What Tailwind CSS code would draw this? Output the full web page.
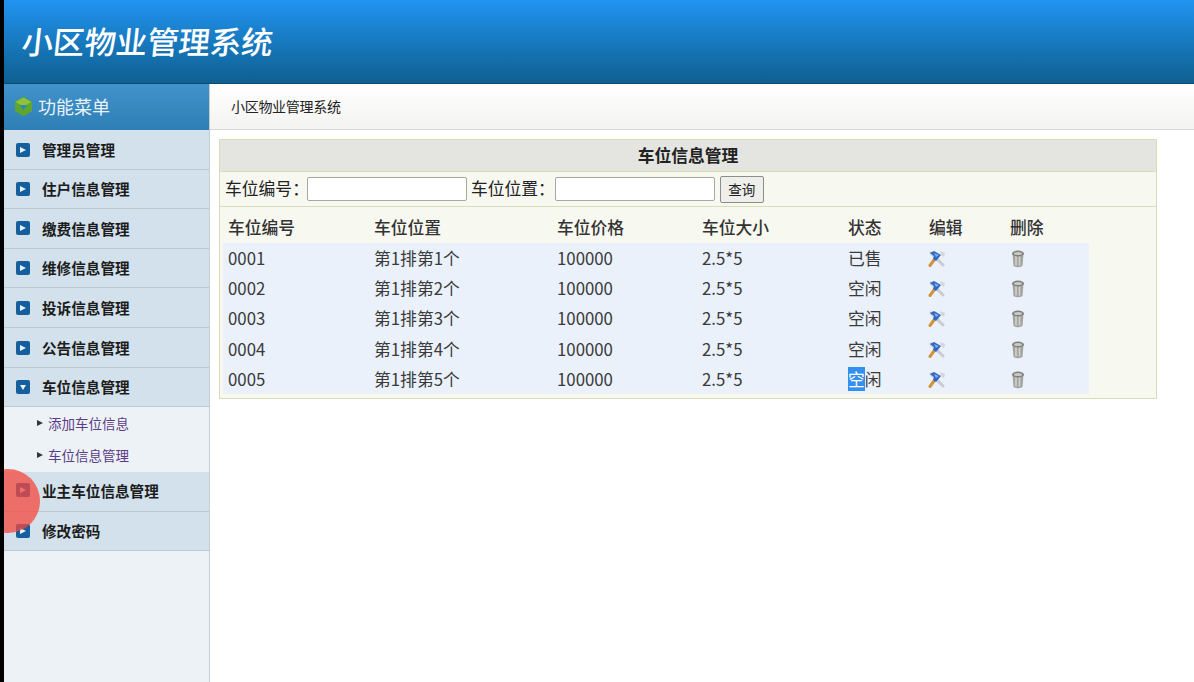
<!DOCTYPE html>
<html lang="zh-CN">
  <head>
    <meta charset="UTF-8" />
    <meta name="viewport" content="width=device-width, initial-scale=1.0" />
    <script src="https://cdn.jsdelivr.net/npm/@tailwindcss/browser@4"></script>
    <title>小区物业管理系统</title>
  </head>
  <body class="h-screen overflow-hidden bg-white border-l-4 border-black font-['Noto_Sans_CJK_SC','Liberation_Sans',sans-serif] text-[#333]">
    <svg class="hidden">
      <symbol id="tools" viewBox="0 0 18 18">
        <path d="M3 3 L15 15" stroke="#c9ccd2" stroke-width="3" stroke-linecap="round" />
        <path d="M12 1 L17 3 L16 7 L13 5 Z" fill="#d3d6db" />
        <path d="M6 10 L2 15.500" stroke="#d2923a" stroke-width="3" stroke-linecap="round" />
        <path d="M2 3 L6 1 L13 5 L8 11 L5 9 L6 6 Z" fill="#2f68c4" />
        <path d="M6 3 L11 5 L8 7 Z" fill="#86aeea" />
      </symbol>
      <symbol id="trash" viewBox="0 0 14 18">
        <path d="M1.500 4 H12.500 L11.500 16 Q7 18.500 2.500 16 Z" fill="#a4a5a1" />
        <path d="M5 6 V15.500 M8.500 6 V15.500" stroke="#d2d3cf" stroke-width="1.500" />
        <ellipse cx="7" cy="3.500" rx="6" ry="3" fill="#7f807c" />
        <ellipse cx="7" cy="3.500" rx="4" ry="1.500" fill="#c9cac6" />
      </symbol>
      <symbol id="arrow" viewBox="0 0 14 14">
        <rect width="14" height="14" rx="2" fill="#15609c" />
        <path d="M4 4 L10 7 L4 10 Z" fill="#e8f2fa" />
      </symbol>
      <symbol id="arrow-down" viewBox="0 0 14 14">
        <rect width="14" height="14" rx="2" fill="#15609c" />
        <path d="M4 5 L10 5 L7 10 Z" fill="#e8f2fa" />
      </symbol>
    </svg>

    <header class="h-[84px] border-b border-[#0b4a72] bg-gradient-to-b from-[#2194f2] to-[#0f6090] pl-[18px] pt-[20px]">
      <div class="text-[31.4px] leading-[42px] font-medium text-white -skew-x-6">小区物业管理系统</div>
    </header>

    <div class="flex h-[598px]">
      <aside class="relative w-[206px] shrink-0 overflow-hidden border-r border-[#c6ccd0] bg-[#ecf2f6]">
        <div class="flex h-[46px] items-center bg-gradient-to-b from-[#4193cb] to-[#2e7fb6] pb-[2px] pl-[10px] text-[18px] text-[#e8f2f8]">
          <svg class="mr-[5px] h-[19px] w-[19px]" viewBox="0 0 18 18">
            <path d="M9 0.500 L16.500 4.800 V13.200 L9 17.500 L1.500 13.200 V4.800 Z" fill="#5fa62c" stroke="#5fa62c" stroke-linejoin="round" />
            <path d="M9 0.500 L16.500 4.800 L9 9 L1.500 4.800 Z" fill="#8fc43a" />
            <path d="M5.500 7.500 L12.500 7.500 L9 12.500 Z" fill="#2f86b8" />
          </svg>
          功能菜单
        </div>

        <a class="flex h-[39.6px] items-center border-b border-[#bccacf] bg-[#d2e1eb] pl-[12px] pt-[0.5px] text-[14.6px] font-bold text-[#1c1c1c]"><svg class="mr-[12px] h-[14px] w-[14px]"><use href="#arrow" /></svg>管理员管理</a>
        <a class="flex h-[39.6px] items-center border-b border-[#bccacf] bg-[#d2e1eb] pl-[12px] text-[14.6px] font-bold text-[#1c1c1c]"><svg class="mr-[12px] h-[14px] w-[14px]"><use href="#arrow" /></svg>住户信息管理</a>
        <a class="flex h-[39.6px] items-center border-b border-[#bccacf] bg-[#d2e1eb] pl-[12px] text-[14.6px] font-bold text-[#1c1c1c]"><svg class="mr-[12px] h-[14px] w-[14px]"><use href="#arrow" /></svg>缴费信息管理</a>
        <a class="flex h-[39.6px] items-center border-b border-[#bccacf] bg-[#d2e1eb] pl-[12px] pt-[0.5px] text-[14.6px] font-bold text-[#1c1c1c]"><svg class="mr-[12px] h-[14px] w-[14px]"><use href="#arrow" /></svg>维修信息管理</a>
        <a class="flex h-[39.6px] items-center border-b border-[#bccacf] bg-[#d2e1eb] pl-[12px] text-[14.6px] font-bold text-[#1c1c1c]"><svg class="mr-[12px] h-[14px] w-[14px]"><use href="#arrow" /></svg>投诉信息管理</a>
        <a class="flex h-[39.6px] items-center border-b border-[#bccacf] bg-[#d2e1eb] pl-[12px] pt-[0.5px] text-[14.6px] font-bold text-[#1c1c1c]"><svg class="mr-[12px] h-[14px] w-[14px]"><use href="#arrow" /></svg>公告信息管理</a>
        <a class="flex h-[39.6px] items-center border-b border-[#bccacf] bg-[#d2e1eb] pl-[12px] text-[14.6px] font-bold text-[#1c1c1c]"><svg class="mr-[12px] h-[14px] w-[14px]"><use href="#arrow-down" /></svg>车位信息管理</a>

        <div class="h-[65px] text-[13.5px] text-[#5b3b86]">
          <a class="flex h-[32px] items-center pl-[33px]"><span class="mr-[5px] h-0 w-0 border-y-[3.5px] border-l-[6px] border-y-transparent border-l-[#333]"></span>添加车位信息</a>
          <a class="flex h-[32px] items-center pl-[33px]"><span class="mr-[5px] h-0 w-0 border-y-[3.5px] border-l-[6px] border-y-transparent border-l-[#333]"></span>车位信息管理</a>
        </div>

        <a class="flex h-[39.6px] items-center border-b border-[#bccacf] bg-[#d2e1eb] pb-[2px] pl-[12px] text-[14.6px] font-bold text-[#1c1c1c]"><svg class="mr-[12px] h-[14px] w-[14px]"><use href="#arrow" /></svg>业主车位信息管理</a>
        <a class="flex h-[39.6px] items-center border-b border-[#bccacf] bg-[#d2e1eb] pl-[12px] text-[14.6px] font-bold text-[#1c1c1c]"><svg class="mr-[12px] h-[14px] w-[14px]"><use href="#arrow" /></svg>修改密码</a>

        <!-- click marker from the screen recording -->
        <div class="absolute left-[-28px] top-[385px] h-[64px] w-[64px] rounded-full bg-[#f5453c]/75"></div>
      </aside>

      <main class="flex-1">
        <div class="flex h-[46px] items-center border-b border-[#d6d6d6] bg-gradient-to-b from-white to-[#f3f3f1] pl-[21px] text-[14px] tracking-[-0.3px] text-[#222]">小区物业管理系统</div>

        <section class="ml-[9px] mt-[9px] h-[260px] w-[938px] border border-[#d8dcb8] bg-[#f7f8f0]">
          <div class="flex h-[32px] items-center justify-center border-b border-[#d8dcb8] bg-[#e4e5e1] text-[16.8px] font-bold text-[#222]">车位信息管理</div>
          <div class="flex h-[35px] items-center border-b border-[#d8dcb8] pl-[5px] text-[16.8px] text-[#222]">
            <span>车位编号：</span>
            <input type="text" class="-ml-[2px] h-[24px] w-[160px] border border-[#a5a9a0] bg-white rounded-[2px]" />
            <span class="ml-[4px]">车位位置：</span>
            <input type="text" class="h-[24px] w-[160px] border border-[#a5a9a0] bg-white rounded-[2px]" />
            <button class="ml-[5px] h-[27px] w-[44px] rounded-[2px] border border-[#8b8f8a] bg-[#eeeeea] text-[13.5px] text-[#222]">查询</button>
          </div>
          <table class="ml-[3px] mt-[2px] w-[866px] table-fixed border-collapse text-left text-[16.8px]">
            <thead>
              <tr class="h-[34px] font-medium text-[#333]">
                <th class="w-[146px] pl-[5px] pt-[4px] font-medium">车位编号</th>
                <th class="w-[183px] pl-[5px] pt-[4px] font-medium">车位位置</th>
                <th class="w-[145px] pl-[5px] pt-[4px] font-medium">车位价格</th>
                <th class="w-[147px] pl-[5px] pt-[4px] font-medium">车位大小</th>
                <th class="w-[81px] pl-[4px] pt-[4px] font-medium">状态</th>
                <th class="w-[81px] pl-[4px] pt-[4px] font-medium">编辑</th>
                <th class="pl-[4px] pt-[4px] font-medium">删除</th>
              </tr>
            </thead>
            <tbody class="bg-[#eaf1fb] text-[#3a3a3a] [&_td]:pt-[2px]">
              <tr class="h-[30px]">
                <td class="pl-[5px]">0001</td><td class="pl-[5px]">第1排第1个</td><td class="pl-[5px]">100000</td><td class="pl-[5px]">2.5*5</td><td class="pl-[4px]">已售</td>
                <td class="pl-[3px]"><svg class="h-[18px] w-[18px]"><use href="#tools" /></svg></td>
                <td class="pl-[5px]"><svg class="h-[18px] w-[14px]"><use href="#trash" /></svg></td>
              </tr>
              <tr class="h-[30px]">
                <td class="pl-[5px]">0002</td><td class="pl-[5px]">第1排第2个</td><td class="pl-[5px]">100000</td><td class="pl-[5px]">2.5*5</td><td class="pl-[4px]">空闲</td>
                <td class="pl-[3px]"><svg class="h-[18px] w-[18px]"><use href="#tools" /></svg></td>
                <td class="pl-[5px]"><svg class="h-[18px] w-[14px]"><use href="#trash" /></svg></td>
              </tr>
              <tr class="h-[30px]">
                <td class="pl-[5px]">0003</td><td class="pl-[5px]">第1排第3个</td><td class="pl-[5px]">100000</td><td class="pl-[5px]">2.5*5</td><td class="pl-[4px]">空闲</td>
                <td class="pl-[3px]"><svg class="h-[18px] w-[18px]"><use href="#tools" /></svg></td>
                <td class="pl-[5px]"><svg class="h-[18px] w-[14px]"><use href="#trash" /></svg></td>
              </tr>
              <tr class="h-[31px]">
                <td class="pl-[5px]">0004</td><td class="pl-[5px]">第1排第4个</td><td class="pl-[5px]">100000</td><td class="pl-[5px]">2.5*5</td><td class="pl-[4px]">空闲</td>
                <td class="pl-[3px]"><svg class="h-[18px] w-[18px]"><use href="#tools" /></svg></td>
                <td class="pl-[5px]"><svg class="h-[18px] w-[14px]"><use href="#trash" /></svg></td>
              </tr>
              <tr class="h-[30px]">
                <td class="pl-[5px]">0005</td><td class="pl-[5px]">第1排第5个</td><td class="pl-[5px]">100000</td><td class="pl-[5px]">2.5*5</td><td class="pl-[4px]"><span class="bg-[#3390f0] text-white">空</span>闲</td>
                <td class="pl-[3px]"><svg class="h-[18px] w-[18px]"><use href="#tools" /></svg></td>
                <td class="pl-[5px]"><svg class="h-[18px] w-[14px]"><use href="#trash" /></svg></td>
              </tr>
            </tbody>
          </table>
        </section>
      </main>
    </div>
  </body>
</html>
